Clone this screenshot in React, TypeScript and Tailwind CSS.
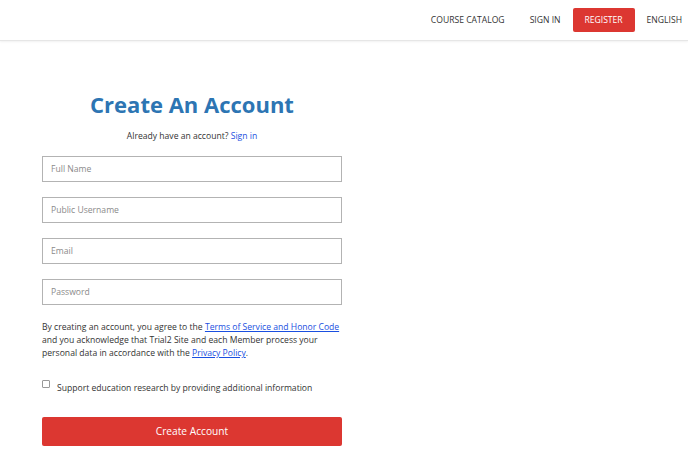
import React from "react";

const fields = ["Full Name", "Public Username", "Email", "Password"];

export default function App() {
  return (
    <div className="min-h-[465px] w-[688px] bg-white font-['Open_Sans',sans-serif] text-[#333]">
      {/* top bar */}
      <header className="h-[41px] border-b border-[#e6e6e6] shadow-[0_1px_2px_rgba(0,0,0,0.06)] flex items-center justify-end pr-[6px]">
        <nav className="flex items-center text-[8.6px] text-[#333]">
          <a className="mr-[25px]">COURSE CATALOG</a>
          <a className="mr-[12px]">SIGN IN</a>
          <a className="h-[24px] w-[62px] flex items-center justify-center rounded-[2px] bg-[#dc3731] text-white mr-[12px]">
            REGISTER
          </a>
          <a>ENGLISH</a>
        </nav>
      </header>

      <main className="ml-[42px] w-[300px] pt-[48px]">
        <h1 className="text-center text-[22px] leading-[30px] font-bold text-[#2d75b3]">Create An Account</h1>
        <p className="mt-[11px] text-center text-[8.6px] leading-[13px]">
          Already have an account? <a className="text-[#1a4fe0]">Sign in</a>
        </p>

        <div className="mt-[13px] flex flex-col gap-[15px]">
          {fields.map((f) => (
            <input
              key={f}
              placeholder={f}
              className="h-[26px] w-full border border-[#b3b3b3] px-[8px] text-[8.6px] placeholder:text-[#8a8a8a] outline-none"
            />
          ))}
        </div>

        <p className="mt-[16px] text-[8.6px] leading-[13px]">
          By creating an account, you agree to the{" "}
          <a className="text-[#1a4fe0] underline">Terms of Service and Honor Code</a> and you acknowledge that Trial2 Site and
          each Member process your personal data in accordance with the{" "}
          <a className="text-[#1a4fe0] underline">Privacy Policy</a>.
        </p>

        <label className="mt-[21px] flex items-start text-[8.6px] leading-[13px]">
          <span className="mt-[-1px] h-[8px] w-[8px] rounded-[1px] border border-[#999] bg-white" />
          <span className="ml-[7px] mt-[1px]">Support education research by providing additional information</span>
        </label>

        <button className="mt-[22px] h-[29px] w-full rounded-[2px] bg-[#dc3731] text-[10.2px] text-white">
          Create Account
        </button>
      </main>
    </div>
  );
}
